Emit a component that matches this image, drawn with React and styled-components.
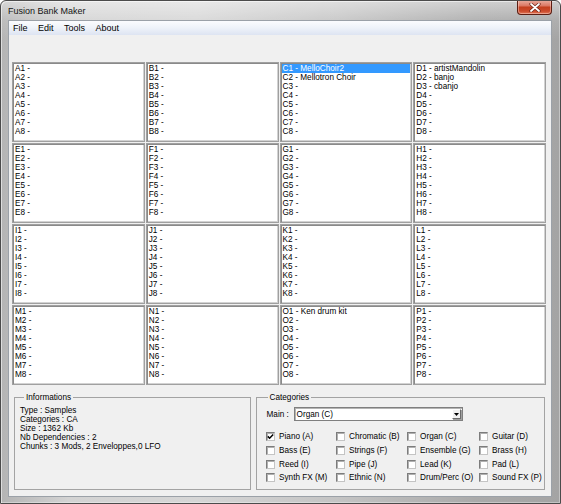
import React from "react";
import styled, { createGlobalStyle } from "styled-components";

const GlobalStyle = createGlobalStyle`
  html, body { margin: 0; padding: 0; background: #ffffff; }
  body { font-family: "Liberation Sans", Arial, sans-serif; }
  * { box-sizing: border-box; }
`;

const Window = styled.div`
  width: 561px;
  height: 504px;
  display: flex;
  flex-direction: column;
  border: 1px solid #4b4b4b;
  border-radius: 6px 6px 0 0;
  overflow: hidden;
  background:
    linear-gradient(to bottom, rgba(255,255,255,0.45) 0px, rgba(255,255,255,0.12) 19px, rgba(255,255,255,0) 40px),
    linear-gradient(to right, #b4b4b4 0%, #d3d3d3 12%, #d6d6d6 35%, #c4c4c4 60%, #aaaaaa 85%, #a4a4a4 100%);
  box-shadow: inset 1px 1px 0 rgba(255,255,255,0.55), inset -1px -1px 0 rgba(255,255,255,0.35);
`;

const TitleBar = styled.div`
  flex: none;
  height: 19px;
  display: flex;
  align-items: flex-start;
  padding: 0 8px 0 7px;
`;

const Title = styled.div`
  flex: 1;
  font-size: 9px;
  line-height: 20px;
  color: #151515;
`;

const CloseButton = styled.div`
  width: 35px;
  height: 15px;
  margin-top: -1px;
  border: 1px solid #5b1d12;
  border-top: none;
  border-radius: 0 0 4px 4px;
  background: linear-gradient(to bottom, #eab0a2 0%, #dc7a66 40%, #c4401f 52%, #cc4b2c 80%, #e07a5a 100%);
  box-shadow: inset 0 0 0 1px rgba(255,220,210,0.45);
  display: flex;
  align-items: center;
  justify-content: center;
`;

const Client = styled.div`
  flex: 1;
  margin: 0 8px 6px 7px;
  background: #f0f0f0;
  border: 1px solid #9ba1a8;
  display: flex;
  flex-direction: column;
`;

const MenuBar = styled.div`
  flex: none;
  height: 14px;
  display: flex;
  align-items: center;
  gap: 10.5px;
  padding-left: 4px;
  background: linear-gradient(to bottom, #fbfcfe 0%, #eef2f9 50%, #dde4f2 100%);
  font-size: 9px;
  color: #000;
`;

const MenuItem = styled.span`
  line-height: 14px;
`;

const Body = styled.div`
  padding: 27px 6px 0 3px;
`;

const BankGrid = styled.div`
  display: grid;
  grid-template-columns: repeat(4, 1fr);
  grid-auto-rows: 80px;
  gap: 1px;
  width: 534px;
`;

const ListBox = styled.div`
  background: #ffffff;
  border: 1px solid #a0a0a0;
  box-shadow: inset 1px 1px 0 #8a8a8a, inset -1px -1px 0 #d2d2d2;
  padding: 1px;
  overflow: hidden;
`;

const ListItem = styled.div`
  height: 9px;
  line-height: 9px;
  font-size: 8.2px;
  padding-left: 1px;
  white-space: nowrap;
  color: ${(p) => (p.$selected ? "#ffffff" : "#000000")};
  background: ${(p) => (p.$selected ? "#3399ff" : "transparent")};
`;

const Bottom = styled.div`
  display: flex;
  gap: 5px;
  margin-top: 8px;
  padding-left: 2px;
`;

const GroupBox = styled.fieldset`
  margin: 0;
  min-width: 0;
  width: ${(p) => p.$w}px;
  height: 97px;
  border: 1px solid #a3a3a3;
  padding: ${(p) => p.$pad};
`;

const Legend = styled.legend`
  font-size: 8.2px;
  line-height: 9px;
  padding: 0 2px;
  margin-left: ${(p) => p.$ml}px;
  color: #000;
`;

const InfoLine = styled.div`
  font-size: 8.2px;
  line-height: 9px;
  color: #000;
  white-space: nowrap;
`;

const MainRow = styled.div`
  display: flex;
  align-items: center;
  height: 14px;
  padding-left: 1px;
`;

const MainLabel = styled.span`
  width: 27px;
  font-size: 8.2px;
  color: #000;
`;

const Combo = styled.div`
  width: 169px;
  height: 14px;
  background: #fff;
  border: 1px solid #7f7f7f;
  box-shadow: inset 1px 1px 0 #b4b4b4;
  display: flex;
  align-items: center;
  padding: 1px 1px 1px 2px;
`;

const ComboText = styled.span`
  flex: 1;
  font-size: 8.2px;
  color: #000;
`;

const ComboButton = styled.div`
  width: 9px;
  height: 10px;
  background: #f0f0f0;
  border: 1px solid;
  border-color: #ffffff #6b6b6b #6b6b6b #ffffff;
  box-shadow: 1px 1px 0 #a0a0a0;
  display: flex;
  align-items: center;
  justify-content: center;
`;

const CheckGrid = styled.div`
  display: grid;
  grid-template-columns: 70px 71px 72px 1fr;
  grid-auto-rows: 13.67px;
  margin-top: 9px;
`;

const CheckItem = styled.div`
  display: flex;
  align-items: center;
  gap: 4.5px;
  font-size: 8.2px;
  color: #000;
  white-space: nowrap;
`;

const Box = styled.span`
  flex: none;
  width: 9px;
  height: 9px;
  background: #fff;
  border: 1px solid;
  border-color: #7c7c7c #c4c4c4 #c4c4c4 #7c7c7c;
  box-shadow: inset 1px 1px 0 #b0b0b0;
  display: flex;
  align-items: center;
  justify-content: center;
`;

const banks = "ABCDEFGHIJKLMNOP".split("");
const names = {
  C1: "MelloChoir2",
  C2: "Mellotron Choir",
  D1: "artistMandolin",
  D2: "banjo",
  D3: "cbanjo",
  O1: "Ken drum kit",
};

const categories = [
  ["Piano (A)", true],
  ["Chromatic (B)", false],
  ["Organ (C)", false],
  ["Guitar (D)", false],
  ["Bass (E)", false],
  ["Strings (F)", false],
  ["Ensemble (G)", false],
  ["Brass (H)", false],
  ["Reed (I)", false],
  ["Pipe (J)", false],
  ["Lead (K)", false],
  ["Pad (L)", false],
  ["Synth FX (M)", false],
  ["Ethnic (N)", false],
  ["Drum/Perc (O)", false],
  ["Sound FX (P)", false],
];

const info = [
  "Type : Samples",
  "Categories : CA",
  "Size : 1362 Kb",
  "Nb Dependencies : 2",
  "Chunks : 3 Mods, 2 Enveloppes,0 LFO",
];

export default function App() {
  return (
    <>
      <GlobalStyle />
      <Window>
        <TitleBar>
          <Title>Fusion Bank Maker</Title>
          <CloseButton>
            <svg width="12" height="9" viewBox="0 0 12 9">
              <path d="M2 1 L10 8 M10 1 L2 8" stroke="#6a2216" strokeWidth="3.2" strokeLinecap="round" />
              <path d="M2 1 L10 8 M10 1 L2 8" stroke="#ffffff" strokeWidth="1.8" strokeLinecap="round" />
            </svg>
          </CloseButton>
        </TitleBar>
        <Client>
          <MenuBar>
            <MenuItem>File</MenuItem>
            <MenuItem>Edit</MenuItem>
            <MenuItem>Tools</MenuItem>
            <MenuItem>About</MenuItem>
          </MenuBar>
          <Body>
            <BankGrid>
              {banks.map((b) => (
                <ListBox key={b}>
                  {Array.from({ length: 8 }, (_, i) => {
                    const key = `${b}${i + 1}`;
                    const n = names[key];
                    return (
                      <ListItem key={key} $selected={key === "C1"}>
                        {key} -{n ? ` ${n}` : ""}
                      </ListItem>
                    );
                  })}
                </ListBox>
              ))}
            </BankGrid>
            <Bottom>
              <GroupBox $w={237} $pad="4px 5px 0 5px">
                <Legend $ml={4}>Informations</Legend>
                {info.map((l) => (
                  <InfoLine key={l}>{l}</InfoLine>
                ))}
              </GroupBox>
              <GroupBox $w={290} $pad="5px 4px 0 9px">
                <Legend $ml={2}>Categories</Legend>
                <MainRow>
                  <MainLabel>Main :</MainLabel>
                  <Combo>
                    <ComboText>Organ (C)</ComboText>
                    <ComboButton>
                      <svg width="5" height="3" viewBox="0 0 5 3">
                        <path d="M0 0 H5 L2.5 3 Z" fill="#000" />
                      </svg>
                    </ComboButton>
                  </Combo>
                </MainRow>
                <CheckGrid>
                  {categories.map(([label, checked]) => (
                    <CheckItem key={label}>
                      <Box>
                        {checked && (
                          <svg width="7" height="7" viewBox="0 0 7 7">
                            <path d="M0.8 3.4 L2.6 5.2 L6.2 1.4" fill="none" stroke="#000" strokeWidth="1.5" />
                          </svg>
                        )}
                      </Box>
                      {label}
                    </CheckItem>
                  ))}
                </CheckGrid>
              </GroupBox>
            </Bottom>
          </Body>
        </Client>
      </Window>
    </>
  );
}
